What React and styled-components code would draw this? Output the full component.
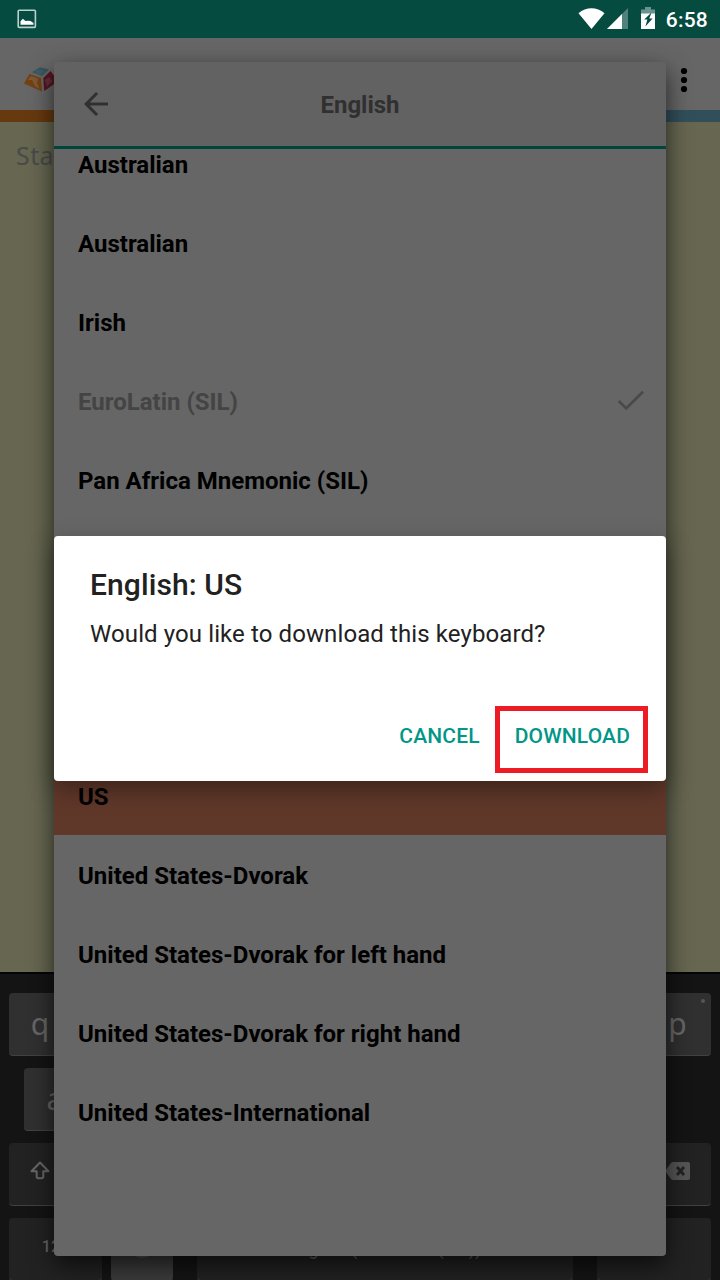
import React from 'react';
import styled, { createGlobalStyle } from 'styled-components';

const GlobalStyle = createGlobalStyle`
  *, *::before, *::after { box-sizing: border-box; }
  body { margin: 0; background: #141414; }
  svg { display: block; flex: none; }
`;

const Screen = styled.div`
  position: relative;
  width: 720px;
  height: 1280px;
  overflow: hidden;
  display: flex;
  flex-direction: column;
  font-family: Roboto, sans-serif;
`;

const StatusBar = styled.div`
  height: 38px;
  flex: none;
  display: flex;
  align-items: center;
  justify-content: space-between;
  padding: 0 12px 0 17px;
  background: #054b40;
  color: #fff;
`;

const StatusIcons = styled.div`
  display: flex;
  align-items: center;
`;

const Clock = styled.span`
  margin-left: 11px;
  padding-top: 2px;
  font-size: 21px;
  font-weight: 500;
  line-height: 36px;
  letter-spacing: 0.2px;
`;

const AppBar = styled.div`
  height: 72px;
  flex: none;
  display: flex;
  align-items: center;
  justify-content: space-between;
  padding: 12px 32px 0 23px;
  background: #666;
`;

const BrandStripe = styled.div`
  height: 12px;
  flex: none;
  display: grid;
  grid-template-columns: 56% 22% 22%;
`;

const StripePart = styled.div`
  background: ${(p) => p.$color};
`;

const Editor = styled.div`
  flex: 1;
  padding: 15px 16px;
  background: #666651;
  color: #4a4a4a;
  font: 25px/36px 'Noto Sans', sans-serif;
  letter-spacing: 0.4px;
`;

const Keyboard = styled.div`
  height: 308px;
  flex: none;
  display: flex;
  flex-direction: column;
  gap: 12px;
  padding-top: 19px;
  border-top: 2px solid #050505;
  background: #141414;
`;

const KeyRow = styled.div`
  height: 63px;
  flex: none;
  display: flex;
  justify-content: space-between;
  padding: 0 ${(p) => p.$right ?? 9}px 0 ${(p) => p.$left ?? 9}px;
`;

const KeyGroup = styled.div`
  display: flex;
  gap: 9px;
`;

const Key = styled.div`
  position: relative;
  width: ${(p) => p.$width ?? 62}px;
  height: 63px;
  display: flex;
  align-items: center;
  justify-content: center;
  padding-right: ${(p) => p.$inset ?? 0}px;
  padding-bottom: ${(p) => p.$lift ?? 0}px;
  border-radius: 4px;
  border-bottom: 1px solid #424242;
  background: ${(p) => (p.$special ? '#222' : p.$light ? '#3b3b3b' : '#303030')};
  color: #666;
  white-space: nowrap;
  font: ${(p) => p.$font ?? "30px/60px 'Noto Sans', sans-serif"};
`;

const KeyHint = styled.span`
  position: absolute;
  top: 6px;
  right: 6px;
  width: 4px;
  height: 4px;
  border-radius: 50%;
  background: #555;
`;

const Globe = styled.div`
  width: 30px;
  height: 30px;
  border-radius: 50%;
  background: #555;
`;

const Picker = styled.div`
  position: absolute;
  left: 54px;
  top: 62px;
  width: 612px;
  height: 1194px;
  display: flex;
  flex-direction: column;
  border-radius: 4px;
  background: #666;
  box-shadow: 0 9px 24px rgba(0, 0, 0, 0.66);
  overflow: hidden;
`;

const PickerHeader = styled.div`
  height: 87px;
  flex: none;
  display: grid;
  grid-template-columns: 60px 1fr 60px;
  align-items: center;
  padding: 0 24px;
  border-bottom: 3px solid #00463d;
  background: #626262;
`;

const PickerTitle = styled.div`
  text-align: center;
  font-size: 24px;
  font-weight: 700;
  line-height: 28px;
  padding-top: 2px;
  color: #303030;
`;

const ListViewport = styled.div`
  flex: 1;
  overflow: hidden;
`;

const List = styled.div`
  margin-top: -25px;
`;

const Row = styled.div`
  height: 79px;
  display: flex;
  align-items: center;
  justify-content: space-between;
  padding: 2px 21px 0 24px;
  background: ${(p) => (p.$selected ? '#60382a' : 'transparent')};
  color: ${(p) => (p.$installed ? '#444' : '#000')};
  font-size: 24px;
  font-weight: 700;
`;

const Dialog = styled.div`
  position: absolute;
  left: 54px;
  top: 536px;
  width: 612px;
  height: 245px;
  display: flex;
  flex-direction: column;
  padding: 31px 18px 8px 36px;
  border-radius: 4px;
  background: #fff;
  color: #212121;
  box-shadow: 0 9px 24px rgba(0, 0, 0, 0.36);
`;

const DialogTitle = styled.div`
  font-size: 30px;
  font-weight: 500;
  line-height: 36px;
  letter-spacing: 0.1px;
`;

const DialogText = styled.div`
  margin-top: 15px;
  font-size: 24px;
  line-height: 32px;
  letter-spacing: 0.1px;
`;

const DialogActions = styled.div`
  margin-top: auto;
  display: flex;
  justify-content: flex-end;
  height: 67px;
`;

const Action = styled.button`
  height: 67px;
  padding: 0 ${(p) => (p.$marked ? 13 : 10)}px 7px 15px;
  border: 5px solid ${(p) => (p.$marked ? '#ed1c24' : 'transparent')};
  background: none;
  color: #009688;
  font: 500 21px/24px Roboto, sans-serif;
  letter-spacing: 0.15px;
  white-space: nowrap;
`;

const PictureIcon = () => (
  <svg width="20" height="20" viewBox="0 0 20 20">
    <rect x="1.2" y="1.2" width="17.2" height="17.2" rx="1" fill="none" stroke="#bcd0cc" strokeWidth="1.6" />
    <path d="M3.5 15.8V12.3L5.8 9.8L8.5 12L11 11.7L13.5 12L16.5 14V15.8Z" fill="#fff" />
  </svg>
);

const WifiIcon = () => (
  <svg width="27" height="22" viewBox="0 0 27 22">
    <path d="M0.5 5.2C8 -1.3 19 -1.3 26.5 5.2L13.5 21Z" fill="#fff" />
  </svg>
);

const Signal = styled.svg`
  margin: 0 13px 1px 2px;
`;

const SignalIcon = () => (
  <Signal width="21" height="21" viewBox="0 0 21 21">
    <path d="M0 21L21 0V21Z" fill="#50817a" />
    <path d="M0 21L15 6V21Z" fill="#fff" />
  </Signal>
);

const Battery = styled.svg`
  margin-bottom: 2px;
`;

const BatteryIcon = () => (
  <Battery width="14" height="22" viewBox="0 0 14 22">
    <path d="M0 2.5H4V0H10V2.5H14V7H0Z" fill="#69938c" />
    <path d="M0 6.5H14V22H0Z" fill="#fff" />
    <path d="M10.5 5.5L3.2 12.6H6.4L4.4 19.5L11.6 11.4H8.3Z" fill="#054b40" />
  </Battery>
);

const BrandLogo = () => (
  <svg width="34" height="26" viewBox="0 1 34 26">
    <path d="M7 6.5L17 1L28 3.5L34 16L20 26L1 17Z" fill="#666" />
    <path d="M9 6.2L17 1.2L26 3.5L19 10Z" fill="#36555f" />
    <path d="M14 3.5L21 5L17 8.5L12 6.8Z" fill="#425b63" />
    <path d="M6.5 8L18 12L19 25.4L1 17.4Z" fill="#744111" />
    <path d="M8 10L15 12.5L14 17L16.5 23L12 20L9 14L5 14Z" fill="#7c5937" />
    <path d="M27.5 5L34 13V16L21.2 25L20.3 12Z" fill="#551522" />
    <path d="M22 14L26 11L29 15L24 21Z" fill="#623039" />
  </svg>
);

const MoreIcon = () => (
  <svg width="8" height="26" viewBox="0 0 8 26">
    <circle cx="4" cy="4" r="3.1" />
    <circle cx="4" cy="13" r="3.1" />
    <circle cx="4" cy="22" r="3.1" />
  </svg>
);

const BackIcon = () => (
  <svg width="36" height="36" viewBox="0 0 24 24" fill="#303030">
    <path d="M20 11H7.83l5.59-5.59L12 4l-8 8 8 8 1.41-1.41L7.83 13H20v-2z" />
  </svg>
);

const CheckIcon = () => (
  <svg width="28" height="24" viewBox="0 0 28 24">
    <path d="M1.7 11L9.2 18.4L26 1.7" fill="none" stroke="#4a4a4a" strokeWidth="2.8" />
  </svg>
);

const ShiftIcon = () => (
  <svg width="20" height="19" viewBox="0 0 20 19">
    <path
      d="M10 1.5L1.5 10.2H6.7V15.5Q6.7 17.2 8.4 17.2H11.6Q13.3 17.2 13.3 15.5V10.2H18.5Z"
      fill="none" stroke="#666" strokeWidth="2" strokeLinejoin="round"
    />
  </svg>
);

const BackspaceIcon = () => (
  <svg width="25" height="18" viewBox="0 0 25 18">
    <path d="M8 0H23Q25 0 25 2V16Q25 18 23 18H8Q7 18 6 17L0 9L6 1Q7 0 8 0Z" fill="#555" />
    <path d="M12 5L19 13M19 5L12 13" stroke="#222" strokeWidth="2.8" />
  </svg>
);

const keyboards = [
  { name: 'Australian' },
  { name: 'Australian' },
  { name: 'Irish' },
  { name: 'EuroLatin (SIL)', installed: true },
  { name: 'Pan Africa Mnemonic (SIL)' },
  {},
  {},
  {},
  { name: 'US', selected: true },
  { name: 'United States-Dvorak' },
  { name: 'United States-Dvorak for left hand' },
  { name: 'United States-Dvorak for right hand' },
  { name: 'United States-International' },
];

const topKeys = ['q', '', '', '', '', '', '', '', '', 'p'];
const homeKeys = ['a', '', '', '', '', '', '', '', ''];

export default function App() {
  return (
    <Screen>
      <GlobalStyle />
      <StatusBar>
        <PictureIcon />
        <StatusIcons>
          <WifiIcon />
          <SignalIcon />
          <BatteryIcon />
          <Clock>6:58</Clock>
        </StatusIcons>
      </StatusBar>
      <AppBar>
        <BrandLogo />
        <MoreIcon />
      </AppBar>
      <BrandStripe>
        <StripePart $color="#66390f" />
        <StripePart $color="#46111b" />
        <StripePart $color="#314f5b" />
      </BrandStripe>
      <Editor>Sta</Editor>
      <Keyboard>
        <KeyRow>
          {topKeys.map((k, i) => (
            <Key key={i} $inset={k === 'p' ? 5 : 0}>
              {k}
              {k === 'p' && <KeyHint />}
            </Key>
          ))}
        </KeyRow>
        <KeyRow $left={24} $right={66}>
          {homeKeys.map((k, i) => (
            <Key key={i}>{k}</Key>
          ))}
        </KeyRow>
        <KeyRow>
          <Key $special $lift={7}><ShiftIcon /></Key>
          <Key $special $width={68} $lift={7}><BackspaceIcon /></Key>
        </KeyRow>
        <KeyRow>
          <KeyGroup>
            <Key $special $width={93} $lift={5} $font="500 16px/56px Roboto, sans-serif">123</Key>
            <Key $light $lift={12}><Globe /></Key>
          </KeyGroup>
          <Key $special $width={376} $font="18px/62px Roboto, sans-serif">English (EuroLatin (SIL))</Key>
          <Key $special $width={114} />
        </KeyRow>
      </Keyboard>

      <Picker>
        <PickerHeader>
          <BackIcon />
          <PickerTitle>English</PickerTitle>
        </PickerHeader>
        <ListViewport>
          <List>
            {keyboards.map((k, i) => (
              <Row key={i} $selected={k.selected} $installed={k.installed}>
                {k.name}
                {k.installed && <CheckIcon />}
              </Row>
            ))}
          </List>
        </ListViewport>
      </Picker>

      <Dialog>
        <DialogTitle>English: US</DialogTitle>
        <DialogText>Would you like to download this keyboard?</DialogText>
        <DialogActions>
          <Action>CANCEL</Action>
          <Action $marked>DOWNLOAD</Action>
        </DialogActions>
      </Dialog>
    </Screen>
  );
}
